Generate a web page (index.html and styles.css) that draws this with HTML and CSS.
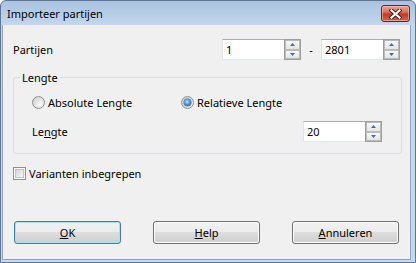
FILE: index.html
```html
<!DOCTYPE html>
<html lang="nl">
    <head>
        <meta charset="UTF-8" />
        <meta name="viewport" content="width=device-width, initial-scale=1.0" />
        <title>Importeer partijen</title>
        <link rel="stylesheet" href="styles.css">
    </head>
    <body>
        <div class="window">
            <div class="titlebar">
                <span class="title">Importeer partijen</span>
                <button class="close" type="button" aria-label="Sluiten">
                    <svg width="13" height="10" viewBox="0 0 13 10">
                        <path d="M2.5 1.5 L10.5 8.5 M10.5 1.5 L2.5 8.5" stroke="#3d1a16" stroke-width="4" stroke-linecap="square" />
                        <path d="M2.5 1.5 L10.5 8.5 M10.5 1.5 L2.5 8.5" stroke="#fff" stroke-width="2.2" stroke-linecap="square" />
                    </svg>
                </button>
            </div>

            <div class="client">
                <!-- range of partijen -->
                <div class="row range-row">
                    <span class="label">Partijen</span>
                    <div class="spin">
                        <span class="spin-value">1</span>
                        <span class="spin-buttons">
                            <span class="spin-btn"><svg width="5" height="3" viewBox="0 0 5 3"><path d="M2.5 0 L5 3 L0 3 Z" /></svg></span>
                            <span class="spin-btn"><svg width="5" height="3" viewBox="0 0 5 3"><path d="M0 0 L5 0 L2.5 3 Z" /></svg></span>
                        </span>
                    </div>
                    <span class="dash">-</span>
                    <div class="spin">
                        <span class="spin-value">2801</span>
                        <span class="spin-buttons">
                            <span class="spin-btn"><svg width="5" height="3" viewBox="0 0 5 3"><path d="M2.5 0 L5 3 L0 3 Z" /></svg></span>
                            <span class="spin-btn"><svg width="5" height="3" viewBox="0 0 5 3"><path d="M0 0 L5 0 L2.5 3 Z" /></svg></span>
                        </span>
                    </div>
                </div>

                <!-- Lengte group -->
                <fieldset class="group">
                    <legend>Lengte</legend>
                    <div class="group-body">
                        <div class="row radio-row">
                            <label class="option">
                                <span class="radio"></span>
                                <span>Absolute Lengte</span>
                            </label>
                            <label class="option">
                                <span class="radio checked"><span class="dot"></span></span>
                                <span>Relatieve Lengte</span>
                            </label>
                        </div>
                        <div class="row length-row">
                            <span class="label">Le<u>n</u>gte</span>
                            <div class="spin">
                                <span class="spin-value">20</span>
                                <span class="spin-buttons">
                                    <span class="spin-btn"><svg width="5" height="3" viewBox="0 0 5 3"><path d="M2.5 0 L5 3 L0 3 Z" /></svg></span>
                                    <span class="spin-btn"><svg width="5" height="3" viewBox="0 0 5 3"><path d="M0 0 L5 0 L2.5 3 Z" /></svg></span>
                                </span>
                            </div>
                        </div>
                    </div>
                </fieldset>

                <label class="row check-row">
                    <span class="checkbox"><span class="check-inner"></span></span>
                    <span>Varianten inbegrepen</span>
                </label>

                <div class="row buttons">
                    <button type="button" class="btn default"><u>O</u>K</button>
                    <button type="button" class="btn"><u>H</u>elp</button>
                    <button type="button" class="btn"><u>A</u>nnuleren</button>
                </div>
            </div>
        </div>
    </body>
</html>
```

FILE: styles.css
```css
body {
    margin: 0;
    font-family: "Noto Sans", "DejaVu Sans", sans-serif;
    font-size: 11px;
    line-height: 15px;
    color: #000;
    background-color: #fff;
}

.window {
    width: 416px;
    height: 263px;
    box-sizing: border-box;
    border: 1px solid #5f7594;
    border-radius: 6px 6px 0 0;
    background: linear-gradient(#a9c2de, #c3d7ee 24px, #c4d8ee);
    padding: 0 4px 2px 1px;
    display: flex;
    flex-direction: column;
}

.titlebar {
    height: 24px;
    display: flex;
    padding-left: 5px;
}

.title {
    flex: 1;
    line-height: 25px;
}

.close {
    width: 29px;
    height: 17px;
    margin: 4px 1px 0 0;
    padding: 0;
    border: 1px solid #6b241d;
    border-radius: 3px;
    background: linear-gradient(#eba392, #d9735c 40%, #c33b22 55%, #d0644c);
    box-shadow: inset 0 0 0 1px rgba(255, 215, 205, 0.5);
    display: flex;
    align-items: center;
    justify-content: center;
}

.client {
    flex: 1;
    background-color: #f0f0f0;
    border: 1px solid #8ea4c1;
    border-top: none;
    padding: 0 8px 0 10px;
    display: flex;
    flex-direction: column;
}

.row {
    display: flex;
    align-items: center;
}

.label {
    flex: 1;
}

/* numeric up-down */
.spin {
    width: 79px;
    height: 21px;
    box-sizing: border-box;
    border: 1px solid;
    border-color: #abadb3 #dbdfe6 #e3e9ef #e2e3ea;
    border-right: none;
    background-color: #fff;
    display: flex;
}

.spin-value {
    flex: 1;
    padding-left: 3px;
    line-height: 19px;
}

.spin-buttons {
    width: 17px;
    margin: -1px 0;
    box-sizing: border-box;
    border: 1px solid #9e9e9e;
    background-color: #f4f4f4;
    display: flex;
    flex-direction: column;
}

.spin-btn {
    flex: 1;
    border: 1px solid #bababa;
    background: linear-gradient(#f9f9f9, #e4e4e4);
    display: flex;
    align-items: center;
    justify-content: center;
}

.spin-btn svg {
    fill: #4a68a6;
}

.range-row {
    margin-top: 14px;
    height: 21px;
}

.dash {
    width: 20px;
    text-align: center;
}

.range-row .spin:last-child {
    margin-right: 2px;
}

/* group box */
.group {
    margin: 10px 0 0 0;
    padding: 0;
    border: 1px solid #d5dfe5;
    border-radius: 3px;
}

.group legend {
    margin-left: 6px;
    padding: 0 2px;
    line-height: 15px;
}

.group-body {
    padding: 0 19px 11px 18px;
}

.radio-row {
    margin-top: 9px;
    height: 16px;
}

.option {
    width: 149px;
    display: flex;
    align-items: center;
    gap: 3px;
}

.radio {
    width: 13px;
    height: 13px;
    box-sizing: border-box;
    border: 1px solid #8e8f8f;
    border-radius: 50%;
    background: radial-gradient(circle at 65% 65%, #fbfbfb, #d6d6d6 75%);
    display: flex;
    align-items: center;
    justify-content: center;
}

.radio .dot {
    width: 7px;
    height: 7px;
    border-radius: 50%;
    background: radial-gradient(circle at 45% 40%, #c4e8ff, #4f97d8 45%, #1c4f8e 90%);
    box-shadow: 0 0 0 0.5px #2a5b93;
}

.length-row {
    margin-top: 11px;
    height: 21px;
}

/* checkbox */
.check-row {
    margin-top: 12px;
    height: 15px;
    gap: 3px;
}

.checkbox {
    width: 13px;
    height: 13px;
    box-sizing: border-box;
    border: 1px solid #8e8f8f;
    background-color: #fff;
    padding: 1px;
}

.check-inner {
    display: block;
    width: 9px;
    height: 9px;
    box-sizing: border-box;
    border: 1px solid #bfc3c8;
    background: linear-gradient(135deg, #d2d5da, #f7f7f7);
}

/* dialog buttons */
.buttons {
    margin-top: 40px;
    margin-left: 1px;
    gap: 32px;
}

.btn {
    width: 107px;
    height: 23px;
    padding: 0;
    font-family: inherit;
    font-size: 11px;
    color: #000;
    border: 1px solid #707070;
    border-radius: 3px;
    background: linear-gradient(#f2f2f2, #ebebeb 50%, #dddddd 50%, #cfcfcf);
    box-shadow: inset 0 0 0 1px #fcfcfc;
}

.btn.default {
    border-color: #3c7fb1;
    box-shadow: inset 0 0 0 1px #a6e1f8;
}
```
